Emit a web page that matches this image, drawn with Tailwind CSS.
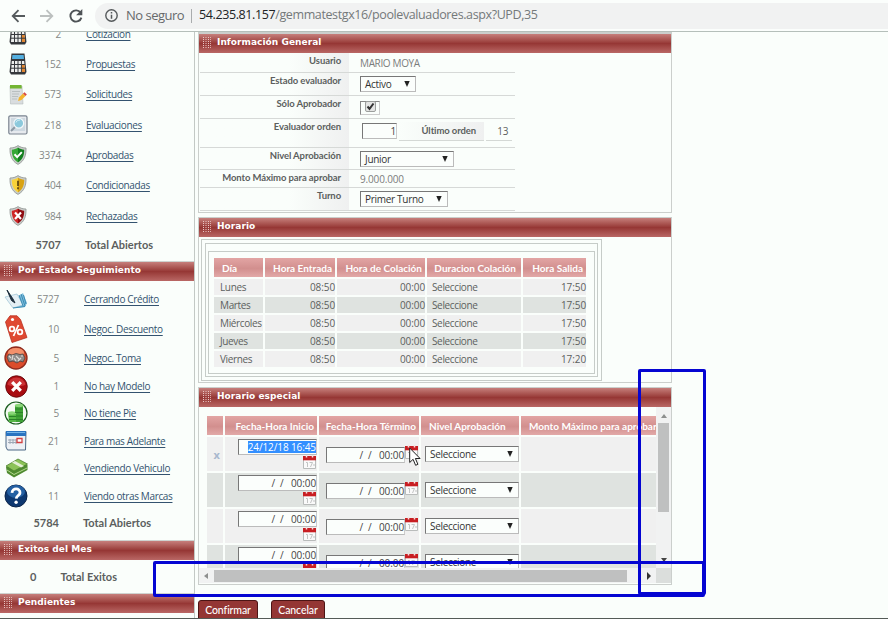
<!DOCTYPE html>
<html lang="es"><head><meta charset="utf-8"><title>Pool evaluadores</title>
<script src="https://cdn.jsdelivr.net/npm/@tailwindcss/browser@4"></script></head>
<body class="relative flex h-[619px] w-[888px] flex-col overflow-hidden bg-[#fafefb] font-['Open_Sans','Noto_Sans',sans-serif] text-[10px] leading-none tracking-[-0.36px] whitespace-nowrap text-[#5c5f5e]">
<header class="flex h-8 shrink-0 items-center border-b border-[#b5bfba] bg-[#fbfefc] text-[13px]">
  <svg class="ml-[11px] h-[14px] w-[14px]" viewBox="0 0 14 14" fill="none" stroke="#555a5d" stroke-width="1.8"><path d="M14 7H2M7.5 1.2L1.7 7l5.8 5.8"/></svg>
  <svg class="ml-[15px] h-[14px] w-[14px]" viewBox="0 0 14 14" fill="none" stroke="#bcc0bf" stroke-width="1.8"><path d="M0 7h12M6.5 1.2L12.3 7l-5.8 5.8"/></svg>
  <svg class="ml-[15px] h-[14px] w-[14px]" viewBox="0 0 14 14"><path d="M11.6 3.7A5.6 5.6 0 1 0 12.4 8.6" fill="none" stroke="#4e5356" stroke-width="1.9"/><path d="M13.3 0v6.200H7.100z" fill="#4e5356"/></svg>
  <div class="ml-[12px] flex h-[26px] flex-1 items-center rounded-l-full bg-[#f1f2f2]">
    <svg class="ml-[10px] h-[13px] w-[13px]" viewBox="0 0 13 13"><circle cx="6.5" cy="6.5" r="5.7" fill="none" stroke="#55595b" stroke-width="1.4"/><path d="M6.5 5.7v4M6.5 3.1v1.5" stroke="#55595b" stroke-width="1.5"/></svg>
    <span class="ml-[8px] w-[58px] text-[13px] tracking-[-0.5px] text-[#66696b]">No seguro</span>
    <i class="ml-[7px] h-[14px] w-px bg-[#a9acad]"></i>
    <span class="ml-[7px] text-[12.5px] tracking-[-0.39px] text-[#74797a]"><b class="font-normal text-[#202324]">54.235.81.157</b>/gemmatestgx16/poolevaluadores.aspx?UPD,35</span>
  </div>
</header>
<div class="flex min-h-0 flex-1 overflow-hidden">
  <aside id="side" class="h-[590px] w-[195px] shrink-0 border-r border-[#c3c9c5]"></aside>
  <main class="ml-[3px] w-[474px] shrink-0">
    <section class="h-[181px] border border-t-2 border-[#cbcfcc]">
      <h2 data-bar>Información General</h2>
      <div id="form" class="ml-px w-[315px]"></div>
    </section>
    <section class="mt-[4px] h-[166px] border border-[#cbcfcc]">
      <h2 data-bar>Horario</h2>
      <div class="mt-[2px] ml-[2px] h-[142px] w-[401px] border border-[#c6ccc8] p-[3px]">
        <div class="h-[134px] border border-[#c6ccc8] px-[2px] pt-[7px] pb-[2px]">
          <div class="h-[123px] border border-[#c6ccc8] pt-[6px] pl-[5px]"><div id="hor" class="grid grid-cols-[49px_70px_88px_94px_63px] gap-x-[2px] gap-y-[2px]"></div></div>
        </div>
      </div>
    </section>
    <section class="mt-[4px] h-[198px] border border-[#cbcfcc]">
      <h2 data-bar>Horario especial</h2>
      <div class="flex h-[161px]">
        <div class="h-full w-[457px] overflow-hidden pt-[9px] pl-[8px]"><div id="esp" class="grid w-[449px] grid-cols-[16px_92px_100px_98px_135px] gap-[2px] overflow-hidden"></div></div>
        <div class="flex w-[15px] flex-col items-center bg-[#f1f2f2]"><i class="mt-[7px] h-0 w-0 border-x-[3px] border-b-[4px] border-x-transparent border-b-[#8d8f8e]"></i><i class="mt-[5px] h-[89px] w-[11px] bg-[#bfc0c0]"></i><i class="mt-[46px] h-0 w-0 border-x-[3px] border-t-[4px] border-x-transparent border-t-[#444]"></i></div>
      </div>
      <div class="flex h-[15px] items-center bg-[#f1f2f2]"><i class="ml-[5px] h-0 w-0 border-y-[3px] border-r-[4px] border-y-transparent border-r-[#8d8f8e]"></i><i class="ml-[6px] h-[12px] w-[413px] bg-[#bfc0c0]"></i><i class="ml-[20px] h-0 w-0 border-y-[4px] border-l-[4px] border-y-transparent border-l-[#333]"></i><i class="ml-auto h-full w-[15px] bg-[#dbdedc]"></i></div>
    </section>
    <div class="mt-[15px] flex gap-[13px] font-[Lato] text-[10.5px] font-medium tracking-[-0.1px] text-white">
      <span class="flex h-[20px] w-[60px] items-center justify-center rounded-t-[3px] border border-[#4c1515] bg-[#943634]">Confirmar</span>
      <span class="flex h-[20px] w-[54px] items-center justify-center rounded-t-[3px] border border-[#4c1515] bg-[#943634]">Cancelar</span>
    </div>
  </main>
</div>
<!-- annotation frames and pointer -->
<i class="absolute top-[369px] left-[638px] h-[226px] w-[68px] rounded-[2px] border-[3px] border-[#0505d2]"></i>
<i class="absolute top-[561px] left-[153px] h-[36px] w-[552px] rounded-[2px] border-[3px] border-[#0505d2]"></i>
<i class="absolute bottom-0 left-0 h-px w-full bg-[#545b57]"></i>
<svg class="absolute top-[447px] left-[409px] h-[20px] w-[12px]" viewBox="0 0 12 20"><path d="M.7 1v14.500l3.400-3.200 2.500 6 2.300-1-2.500-5.800h4.700z" fill="#fff" stroke="#222" stroke-width="1"/></svg>
<script>
const shield=(a,b,m)=>`<svg class="h-[20px] w-[18px]" viewBox="0 0 18 20"><path d="M9 .6C6.500 2.300 4 3 1 3c-.3 7 1.500 13 8 16.400C15.500 16 17.300 10 17 3c-3 0-5.500-.7-8-2.400z" fill="#c9cdca" stroke="#8e9390" stroke-width=".8"/><path d="M9 2.600C7 4 5 4.600 2.800 4.700 2.700 10 4.200 14.600 9 17.400z" fill="${a}"/><path d="M9 2.600c2 1.400 4 2 6.200 2.100.1 5.300-1.400 9.900-6.200 12.700z" fill="${b}"/>${m}</svg>`;
const calc=`<svg class="h-[22px] w-[18px]" viewBox="0 0 18 22"><path d="M2.500 .5h13l2 18.500-1.500 2.500H2L.5 19z" fill="#35383c"/><path d="M3.400 2h11.200l.4 4H3z" fill="#53afe0"/><path d="M2.800 8h12.400l.8 11H2z" fill="#eceeed"/><path d="M12.300 11.500h3.400l.3 7.500h-3.700z" fill="#e08531"/><path d="M2 11.500h14M2 15.200h14M5.500 8v11M9 8v11M12.400 8v11" stroke="#35383c" stroke-width="1"/></svg>`;
const I={calc,
sol:`<svg class="h-[21px] w-[20px]" viewBox="0 0 20 21"><path d="M2 2h12l1 18H2.500z" fill="#d9dddf" stroke="#b6bcbc" stroke-width=".6"/><path d="M2 1h11.500l.3 3.500H2z" fill="#72b532"/><path d="M4 7.500h8M4 10h7M4 12.500h6M4 15h5" stroke="#b9bfc1"/><path d="M10 17l1-3.500 4-4 2.500 2.400-4 4z" fill="#f4b42c"/><path d="M15 9.500l1.500-1.300 2.300 2.300-1.300 1.400z" fill="#d6473f"/></svg>`,
eva:`<svg class="h-[20px] w-[20px]" viewBox="0 0 20 20"><rect x=".8" y=".8" width="18.200" height="18.200" rx="1.500" fill="#e6eaee" stroke="#7a8490" stroke-width="1.200"/><path d="M3 3h14v13H3z" fill="#cdd8e0"/><path d="M7.500 11.500L3 16" stroke="#8c98a2" stroke-width="2"/><circle cx="10.800" cy="8.300" r="4.900" fill="#8cc9dc" stroke="#f3f8fa" stroke-width="1.300"/><path d="M8 7.500a3.500 3.500 0 0 1 4-2.500" stroke="#d9f1f8" fill="none"/></svg>`,
ok:shield('#35a835','#148020','<path d="M5.500 9.200l2.700 2.900 4.600-5" fill="none" stroke="#fff" stroke-width="2"/>'),
warn:shield('#f8d23a','#d9a312','<path d="M9 5.800v5.200M9 12.300v2" stroke="#5b4310" stroke-width="1.700"/>'),
bad:shield('#cf2626','#8f0d11','<path d="M6 6.500l6 6.500M12 6.500L6 13" stroke="#fff" stroke-width="2.200"/>'),
pen:`<svg class="h-[22px] w-[24px]" viewBox="0 0 24 22"><path d="M9 20l12-1 2-4-4-10-4 3z" fill="#7cbcdc"/><path d="M1 9l12-3 6 11-10 3z" fill="#e4eff4" stroke="#9cc3d4" stroke-width=".7"/><path d="M15 7l4 11M17 6l4 12M19.500 7l2.500 9" stroke="#3c8db3" fill="none"/><path d="M9 20l12-1.500" stroke="#3c8db3"/><path d="M3 2l6 9 2 4-3.500-2.500z" fill="#1d2f3d" stroke="#1d2f3d"/></svg>`,
tag:`<svg class="h-[28px] w-[24px]" viewBox="0 0 24 28"><path d="M1.500 7L6 .8h7l3.500 3.700L23 22.500 8 27.500z" fill="#df4932" stroke="#b93120" stroke-width=".8"/><circle cx="8.500" cy="4.500" r="1.600" fill="#fff"/><g fill="none" stroke="#fff" stroke-width="1.800"><circle cx="8" cy="14" r="2.300"/><circle cx="16" cy="17" r="2.300"/><path d="M14.500 10L9.500 21"/></g></svg>`,
toma:`<svg class="h-[24px] w-[24px]" viewBox="0 0 24 24"><circle cx="12" cy="12" r="11" fill="#dc4d2b" stroke="#8e2c1e" stroke-width="1.300"/><ellipse cx="12" cy="6.500" rx="8" ry="4.500" fill="#f3906b"/><path d="M3 11l2-3 3 1 4-1.500 4 1 3-.5 2 4-2 4-3-1-3 2-4-2-4 1z" fill="#8f8b89" stroke="#4a4341" stroke-width=".8"/><path d="M5 10l2 2M9 9l-1 5M12 10l3 3M14 15l3-3M17 10h2M10 12l2 3" stroke="#dedbd8" stroke-width="1.200"/></svg>`,
no:`<svg class="h-[23px] w-[23px]" viewBox="0 0 24 24"><circle cx="12" cy="12" r="11.200" fill="#a90e12" stroke="#690a0d"/><path d="M2.500 10a9.800 9.800 0 0 1 19 0C17 13 7 13 2.500 10z" fill="#cb3235"/><path d="M7.500 7.500l9 9M16.500 7.500l-9 9" stroke="#fff" stroke-width="3.400"/></svg>`,
pie:`<svg class="h-[24px] w-[24px]" viewBox="0 0 24 24"><circle cx="12" cy="12" r="11" fill="#f4faf3" stroke="#195c1d" stroke-width="1.200"/><path d="M11 4h8v17h-8z" fill="#3fa335"/><path d="M4 12h8v9H5z" fill="#57b947"/><ellipse cx="15" cy="4.500" rx="4.200" ry="1.700" fill="#8bd779"/><ellipse cx="8" cy="12" rx="4.200" ry="1.700" fill="#8bd779"/><path d="M11 8h8M11 11.500h8M12 15h7M5 15.500h7M5 18.500h14" stroke="#2b8228"/></svg>`,
cal:`<svg class="h-[21px] w-[22px]" viewBox="0 0 22 21"><path d="M1 1.500h20l-.5 18.500H2.500L1 17z" fill="#edf1f5" stroke="#4d6885"/><path d="M1 1h20v5H1z" fill="#2a74c0"/><path d="M2 2.500h18" stroke="#75b5e8"/><path d="M3 10h9M3 12.500h12M5 9v5M8 9v5M11 9v5" stroke="#9ea9b6"/><path d="M12 8.500h5v4h-5z" fill="#fff" stroke="#d34242" stroke-width="1.300"/></svg>`,
cash:`<svg class="h-[20px] w-[23px]" viewBox="0 0 23 20"><path d="M1 9l13-5 8.500 3v5L9 19.500 2 15z" fill="#4f8b30"/><path d="M1 8l12-7 9.500 5L9 13z" fill="#8cc257" stroke="#4c832d" stroke-width=".8"/><path d="M7 4.500l9 5 3-1.600-9-5z" fill="#e4eed5"/><path d="M2 12l7 4.500L22 10" stroke="#b4d98d" fill="none"/></svg>`,
q:`<svg class="h-[24px] w-[24px]" viewBox="0 0 24 24"><circle cx="12" cy="12" r="11" fill="#0d3870" stroke="#0b2448"/><ellipse cx="12" cy="7.500" rx="9" ry="6.500" fill="#2460a2"/><path d="M8 8.800c.3-5.300 8.300-5 8 0-.2 2.700-3.500 2.800-3.800 5.800" fill="none" stroke="#fff" stroke-width="2.800"/><circle cx="12.100" cy="18.300" r="1.700" fill="#fff"/></svg>`};
const dots='<svg class="ml-[4px] h-[11px] w-[8px]" viewBox="0 0 8 11"><path d="M.5 0v11M3 0v11M5.500 0v11M7.700 0v11" stroke="#e9c6c4" stroke-dasharray="1 1"/></svg>';
const bar=t=>`<div class="flex h-[19px] items-center bg-linear-to-b from-[#c67f7c] via-[#963735] to-[#b96765] pb-[2px] font-['DejaVu_Sans',sans-serif] text-[9px] font-bold tracking-[0.05px] text-white">${dots}<span class="ml-[6px]">${t}</span></div>`;
document.querySelectorAll('[data-bar]').forEach(e=>{e.innerHTML=bar(e.textContent)});
const row=(h,i,n,t,k)=>`<div class="flex items-center" style="height:${h}px"><span class="flex w-[36px] shrink-0 justify-center ${k?'-ml-[2px]':''}">${I[i]}</span><span class="w-[25px] text-right tracking-[-0.2px] text-[#858886]">${n}</span><a class="ml-[25px] text-[#33536f] underline underline-offset-2">${t}</a></div>`;
const tot=(h,n,t,k)=>`<div class="flex items-center font-[Lato] text-[11px] font-bold tracking-normal" style="height:${h}px"><span class="w-[61px] text-right ${k?'-ml-[2px]':''}">${n}</span><span class="ml-[24px]">${t}</span></div>`;
const sbar=t=>`<div class="h-[1px] bg-[#cfd3d0]"></div>${bar(t)}`;
side.innerHTML='<div class="h-[229px] overflow-hidden"><div class="-mt-[13px]">'+
[[30,'calc',2,'Cotización'],[30,'calc',152,'Propuestas'],[30,'sol',573,'Solicitudes'],[31,'eva',218,'Evaluaciones'],[30,'ok',3374,'Aprobadas'],[30,'warn',404,'Condicionadas'],[31,'bad',984,'Rechazadas']].map(a=>row(...a)).join('')+tot(26,5707,'Total Abiertos')+'</div></div>'+sbar('Por Estado Seguimiento')+'<div class="pt-[3px] h-[259px]">'+
[[30,'pen',5727,'Cerrando Crédito'],[29,'tag',10,'Negoc. Descuento'],[30,'toma',5,'Negoc. Toma'],[26,'no',1,'No hay Modelo'],[28,'pie',5,'No tiene Pie'],[27,'cal',21,'Para mas Adelante'],[28,'cash',4,'Vendiendo Vehiculo'],[28,'q',11,'Viendo otras Marcas']].map(a=>row(...a,1)).join('')+tot(25,5784,'Total Abiertos',1)+'</div>'+sbar('Exitos del Mes')+
'<div class="flex h-[33px] items-center pl-[30px] font-[Lato] text-[11px] font-bold tracking-normal"><span>0</span><span class="ml-[24px]">Total Exitos</span></div>'+sbar('Pendientes');
const sel=(w,t)=>`<span class="flex h-[16px] items-center justify-between border border-t-[#777] border-r-[#bbb] border-b-[#bbb] border-l-[#777] bg-[#fbfefc] pr-[5px] pl-[4px] tracking-[-0.3px] text-[#333]" style="width:${w}px">${t}<svg class="h-[6px] w-[6px]" viewBox="0 0 6 6"><path d="M.3 0h5.400L3 6z" fill="#222"/></svg></span>`;
const inp=(t,w,c='')=>`<span class="flex h-[16px] items-center justify-end border border-t-[#777] border-r-[#ccc] border-b-[#bbb] border-l-[#777] bg-[#fbfefc] tracking-[-0.1px] text-[#444] ${c}" style="width:${w}px">${t}</span>`;
form.innerHTML=[[20,'Usuario','<span class="text-[#7b7d7c]">MARIO MOYA</span>'],[23,'Estado evaluador',sel(56,'Activo')],[23,'Sólo Aprobador','<span class="mt-[2px] flex h-[14px] w-[20px] items-start justify-center border border-t-[#888] border-r-[#ccc] border-b-[#ccc] border-l-[#888]"><svg class="-mt-px h-[11px] w-[11px]" viewBox="0 0 11 11"><rect x=".5" y=".5" width="10" height="10" rx="1.500" fill="#e4e5e4" stroke="#9b9e9c"/><path d="M2.500 5.500l2 2.300 4-5.300" fill="none" stroke="#333" stroke-width="2"/></svg></span>'],[29,'Evaluador orden','<span class="-mt-[4px] ml-[2px] flex items-center">'+inp('1',35)+'<span class="ml-[2px] flex h-[19px] w-[85px] items-center justify-end border-b border-[#d4d8d5] bg-linear-to-r from-[#fafefb] to-[#eff0f0] pr-[8px] font-[Lato] text-[9.5px] font-bold tracking-[-0.1px]">Último orden</span><span class="ml-[2px] flex h-[19px] w-[26px] items-center justify-end border-b border-[#d4d8d5] pr-[4px]">13</span></span>'],[22,'Nivel Aprobación',sel(94,'Junior')],[18,'Monto Máximo para aprobar','<span class="tracking-[-0.15px] text-[#7b7d7c]">9.000.000</span>'],[23,'Turno',sel(88,'Primer Turno')]].map(([h,l,v])=>`<div class="flex items-center border-b border-[#d6d9d7]" style="height:${h}px"><span class="flex h-full w-[149px] shrink-0 items-start justify-end bg-linear-to-r from-[#fafefb] from-60% to-[#eff0f0] pt-[3px] pr-[8px] font-[Lato] text-[9.5px] font-bold tracking-[-0.1px]">${l}</span><span class="ml-[11px]">${v}</span></div>`).join('');
const th=(t,c='')=>`<div class="flex h-[19px] items-center overflow-hidden bg-linear-to-b from-[#e2a5a4] via-[#d28f8e] via-55% to-[#e2a9a8] font-[Lato] text-[10px] font-bold tracking-normal text-white ${c}">${t}</div>`;
hor.innerHTML=th('Día','pl-[8px]')+th('Hora Entrada','justify-end pr-[3px]')+th('Hora de Colación','justify-end pr-[3px]')+th('Duracion Colación','justify-end pr-[5px]')+th('Hora Salida','justify-end pr-[3px]')+
['Lunes','Martes','Miércoles','Jueves','Viernes'].map((d,i)=>[[d,'pl-[6px]'],['08:50','justify-end tracking-[-0.1px]'],['00:00','justify-end tracking-[-0.1px]'],['Seleccione','pl-[5px]'],[i==4?'17:20':'17:50','justify-end tracking-[-0.1px]']].map(([t,c])=>`<div class="flex h-[16px] items-center ${c} ${i%2?'bg-[#dfe3e0]':'bg-[#f0f0f0]'}">${t}</div>`).join('')).join('');
const ci='<svg class="h-[14px] w-[13px] shrink-0" viewBox="0 0 13 14"><path d="M.5 4h12v9.500H.5z" fill="#fafafa" stroke="#b9bcbb"/><path d="M0 1h13v4.300H0z" fill="#c81e22"/><path d="M3.500 0v2.600M9.500 0v2.600" stroke="#f5dede" stroke-width="1.500"/><path d="M3 7.500h1.500V12M6.500 7.500h3L7.500 12M10 10h2" fill="none" stroke="#c2c4c3"/></svg>';
esp.innerHTML=th('')+th('Fecha-Hora Inicio','justify-end pr-[3px]')+th('Fecha-Hora Término','justify-end pr-[3px]')+th('Nivel Aprobación','pl-[8px]')+th('Monto Máximo para aprobar','pl-[8px]')+
[0,1,2,3].map(i=>{const b=i%2?'bg-[#dfe3e0]':'bg-[#f0f0f0]',e='<span class="whitespace-pre">/  /   00:00</span>';return `<div class="flex h-[34px] items-center justify-center pl-[3px] text-[11px] font-bold text-[#a9b8ce] ${b}">${i?'':'x'}</div><div class="flex h-[34px] flex-col items-end pt-[2px] ${b}">${inp(i?e:'<span class="bg-[#338fff] py-[1px] text-white">24/12/18 16:45</span>',79)}<span class="pr-px">${ci}</span></div><div class="flex h-[34px] pt-[8px] pl-[7px] ${b}">${inp(e,79,'mt-[2px]')}${ci}</div><div class="flex h-[34px] items-center pl-[4px] ${b}">${sel(94,'Seleccione')}</div><div class="h-[34px] ${b}"></div>`}).join('');
</script>
</body></html>
